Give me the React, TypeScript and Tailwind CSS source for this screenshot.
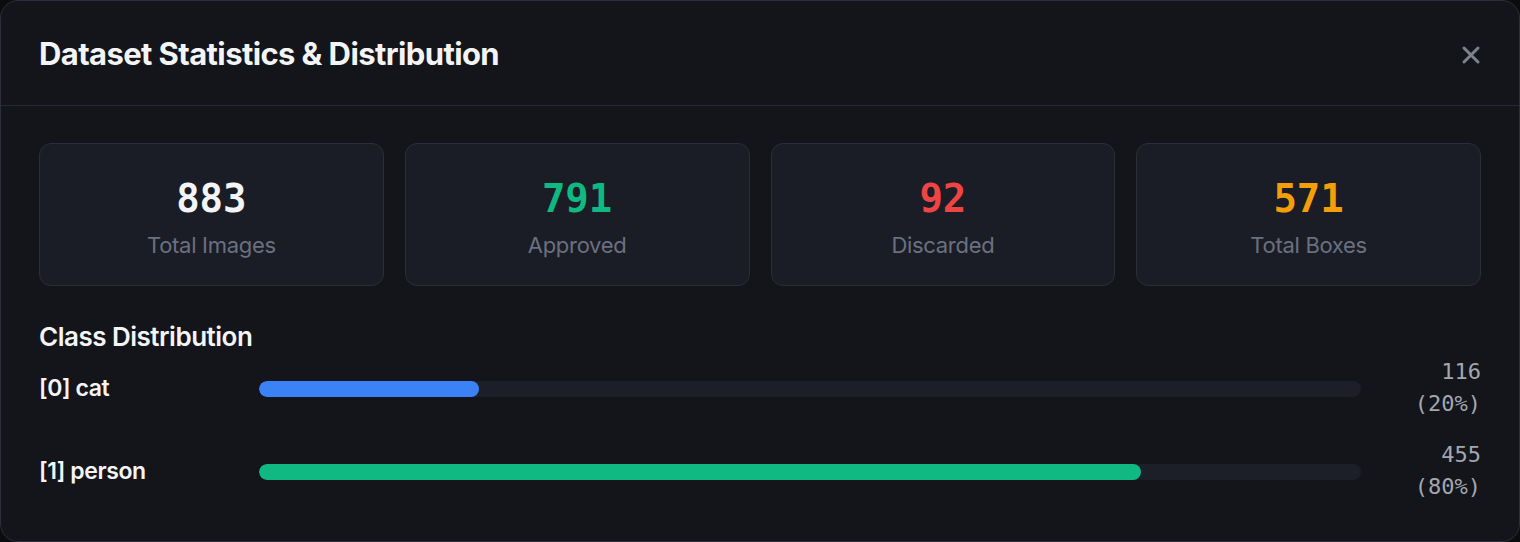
import React from "react";

const stats = [
  { value: "883", label: "Total Images", color: "text-[#f3f4f6]" },
  { value: "791", label: "Approved", color: "text-[#10b981]" },
  { value: "92", label: "Discarded", color: "text-[#ef4444]" },
  { value: "571", label: "Total Boxes", color: "text-[#f59e0b]" },
];

const classes = [
  { name: "[0] cat", count: 116, pct: 20, bar: "bg-[#3b82f6]" },
  { name: "[1] person", count: 455, pct: 80, bar: "bg-[#10b981]" },
];

const sans = "font-['Inter','Noto_Sans',sans-serif]";
const mono = "font-['DejaVu_Sans_Mono','Liberation_Mono',monospace]";

export default function App() {
  return (
    <div className="w-[1520px] h-[542px] bg-[#0b0c10]">
      <div
        className={`h-full rounded-[18px] border border-[#2b2f3a] bg-[#13151b] flex flex-col ${sans}`}
      >
        <div className="h-[105px] shrink-0 flex items-center justify-between px-[38px] border-b border-[#262a34]">
          <h2 className="text-[31px] font-bold tracking-[-0.6px] text-[#f3f4f6] pt-[2px]">
            Dataset Statistics &amp; Distribution
          </h2>
          <button className="text-[#7d828d] -mr-[2px] pt-[4px]">
            <svg width="24" height="24" viewBox="0 0 24 24" fill="none" stroke="currentColor" strokeWidth="3" strokeLinecap="round">
              <path d="M5 5L19 19M19 5L5 19" />
            </svg>
          </button>
        </div>

        <div className="px-[38px] pt-[37px]">
          <div className="grid grid-cols-4 gap-[21px]">
            {stats.map((s) => (
              <div
                key={s.label}
                className="h-[143px] pt-[8px] rounded-[12px] border border-[#2a2e39] bg-[#1a1d25] flex flex-col items-center justify-center"
              >
                <div className={`text-[39px] leading-[44px] font-bold ${mono} ${s.color}`}>
                  {s.value}
                </div>
                <div className="text-[22px] leading-[30px] mt-[9px] text-[#6b7080] tracking-[-0.3px]">
                  {s.label}
                </div>
              </div>
            ))}
          </div>

          <h3 className="mt-[35px] text-[26px] leading-[32px] font-semibold tracking-[-0.5px] text-[#f3f4f6]">
            Class Distribution
          </h3>

          <div className="mt-[3px] flex flex-col gap-[19px]">
            {classes.map((c) => (
              <div key={c.name} className="flex items-center">
                <div className="w-[220px] shrink-0 text-[23px] font-semibold tracking-[-0.4px] text-[#f3f4f6]">
                  {c.name}
                </div>
                <div className="flex-1 h-[16px] mt-[2px] rounded-full bg-[#1c1f27] overflow-hidden">
                  <div
                    className={`h-full rounded-full ${c.bar}`}
                    style={{ width: `${c.pct}%` }}
                  />
                </div>
                <div
                  className={`w-[120px] shrink-0 text-right text-[22px] leading-[32px] text-[#a3a7b0] ${mono}`}
                >
                  <div>{c.count}</div>
                  <div>({c.pct}%)</div>
                </div>
              </div>
            ))}
          </div>
        </div>
      </div>
    </div>
  );
}
